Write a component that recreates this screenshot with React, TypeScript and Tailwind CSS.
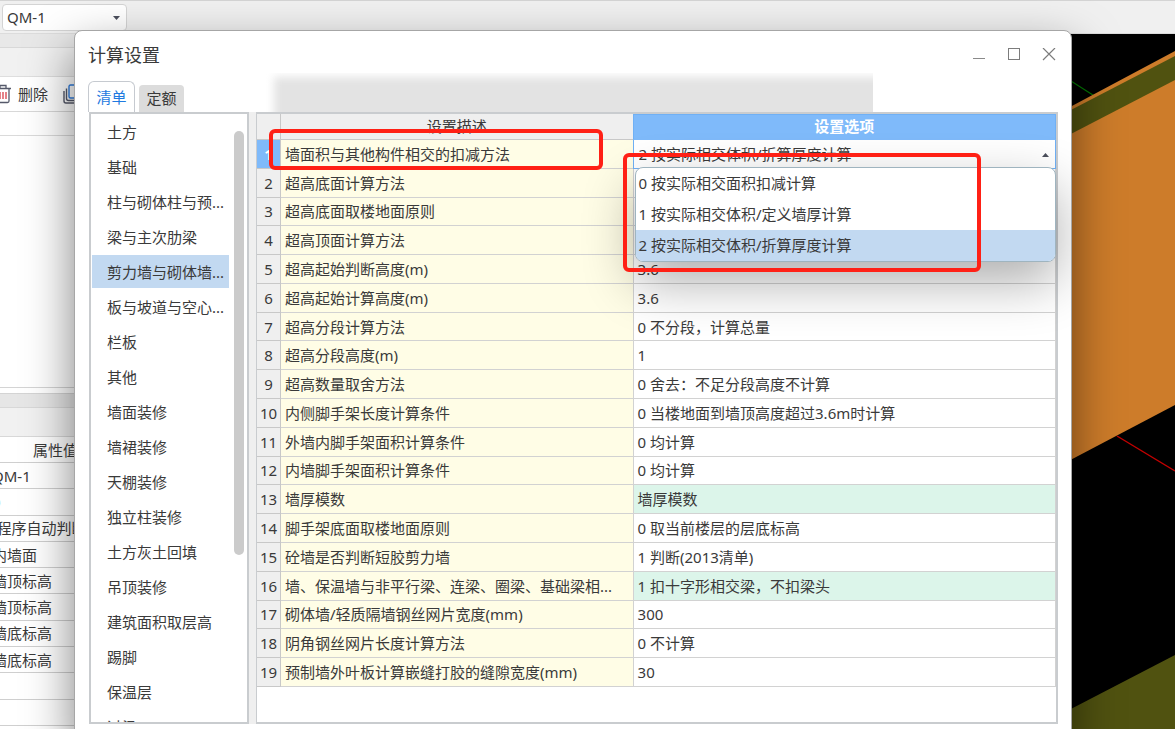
import clsx from 'clsx';

const CATEGORIES = [
  '土方',
  '基础',
  '柱与砌体柱与预...',
  '梁与主次肋梁',
  '剪力墙与砌体墙...',
  '板与坡道与空心...',
  '栏板',
  '其他',
  '墙面装修',
  '墙裙装修',
  '天棚装修',
  '独立柱装修',
  '土方灰土回填',
  '吊顶装修',
  '建筑面积取层高',
  '踢脚',
  '保温层',
  '过梁',
];

const SETTINGS = [
  { name: '墙面积与其他构件相交的扣减方法', value: '2 按实际相交体积/折算厚度计算' },
  { name: '超高底面计算方法', value: '' },
  { name: '超高底面取楼地面原则', value: '' },
  { name: '超高顶面计算方法', value: '' },
  { name: '超高起始判断高度(m)', value: '3.6' },
  { name: '超高起始计算高度(m)', value: '3.6' },
  { name: '超高分段计算方法', value: '0 不分段，计算总量' },
  { name: '超高分段高度(m)', value: '1' },
  { name: '超高数量取舍方法', value: '0 舍去：不足分段高度不计算' },
  { name: '内侧脚手架长度计算条件', value: '0 当楼地面到墙顶高度超过3.6m时计算' },
  { name: '外墙内脚手架面积计算条件', value: '0 均计算' },
  { name: '内墙脚手架面积计算条件', value: '0 均计算' },
  { name: '墙厚模数', value: '墙厚模数', changed: true },
  { name: '脚手架底面取楼地面原则', value: '0 取当前楼层的层底标高' },
  { name: '砼墙是否判断短胶剪力墙', value: '1 判断(2013清单)' },
  { name: '墙、保温墙与非平行梁、连梁、圈梁、基础梁相...', value: '1 扣十字形相交梁，不扣梁头', changed: true },
  { name: '砌体墙/轻质隔墙钢丝网片宽度(mm)', value: '300' },
  { name: '阴角钢丝网片长度计算方法', value: '0 不计算' },
  { name: '预制墙外叶板计算嵌缝打胶的缝隙宽度(mm)', value: '30' },
];

const OPTIONS = ['0 按实际相交面积扣减计算', '1 按实际相交体积/定义墙厚计算', '2 按实际相交体积/折算厚度计算'];

const PROPERTIES = ['QM-1', '0', '(程序自动判断)', '内墙面', '墙顶标高', '墙顶标高', '墙底标高', '墙底标高', '', ''];

const TrashIcon = () => (
  <svg width="18" height="20" viewBox="0 0 18 20" fill="none" strokeWidth="1.3" className="-ml-[6px] shrink-0">
    <path d="M1 4.5h16M6 4V1.5h6V4M3 5v12q0 1.5 1.5 1.5h9q1.5 0 1.5-1.5V5" stroke="#55596a" />
    <path d="M6 8v7M9 8v7M12 8v7" stroke="#d8404a" />
  </svg>
);

const CopyIcon = () => (
  <svg width="20" height="20" viewBox="0 0 20 20" fill="none" strokeWidth="1.4">
    <path d="M1 7v10q0 2 2 2h10M3.5 4.5v10q0 2 2 2h9" stroke="#55596a" />
    <rect x="6" y="1" width="13" height="13" rx="1.5" stroke="#2f7de0" />
  </svg>
);

const TopBar = () => (
  <header className="flex h-[34px] shrink-0 items-center border-t border-b border-t-[#d4d4d4] border-b-[#dcdcdc] bg-[#f0f0f0] pl-[2px]">
    <div className="relative">
      <select
        aria-label="构件"
        className="block h-[27px] w-[125px] appearance-none rounded-sm border border-[#d4d4d4] bg-white pl-[4px] leading-5"
      >
        <option>QM-1</option>
      </select>
      <svg width="7" height="4" viewBox="0 0 7 4" className="pointer-events-none absolute top-[12px] right-[7px]">
        <path d="M0 0h7L3.5 4z" fill="#4b4f5c" />
      </svg>
    </div>
  </header>
);

const LeftPanel = () => (
  <aside className="flex w-[120px] shrink-0 flex-col overflow-hidden bg-white">
    <div className="h-[14px] shrink-0 border-b border-[#d8d8d8] bg-[#e8e8e8]" />
    <div className="h-[29px] shrink-0 border-b border-[#dedede] bg-[#f1f1f1]" />
    <div className="flex h-[35px] shrink-0 items-center border-b border-[#d8d8d8]">
      <button className="flex items-center gap-[6px]">
        <TrashIcon />
        删除
      </button>
      <button aria-label="复制" className="ml-[15px]">
        <CopyIcon />
      </button>
    </div>
    <div className="h-[24px] shrink-0 border-b border-[#dadada]" />
    <div className="h-[252px] shrink-0 border-b border-[#d4d4d4]" />
    <div className="h-[6px] shrink-0 border-b border-[#d4d4d4]" />
    <div className="h-[14px] shrink-0 border-b border-[#d8d8d8] bg-[#e6e6e6]" />
    <div className="h-[29px] shrink-0 border-b border-[#d8d8d8] bg-[#f1f1f1]" />
    <table className="h-[289px] w-full shrink-0 table-fixed border-separate border-spacing-0 whitespace-nowrap">
      <thead>
        <tr className="h-[26px]">
          <th className="border-b border-[#cfcfcf] p-0 pl-[33px] text-left leading-5 font-normal">属性值</th>
        </tr>
      </thead>
      <tbody>
        {PROPERTIES.map((text, i) => (
          <tr key={i}>
            <td className="border-b border-[#cfcfcf] p-0">
              <p className={clsx('-ml-2 h-5 leading-5', i === 1 && 'text-[#2f8be6]')}>{text}</p>
            </td>
          </tr>
        ))}
      </tbody>
    </table>
  </aside>
);

const ModelView = () => (
  <main className="flex flex-1 justify-end overflow-hidden bg-black">
    <svg width="135" height="695" viewBox="1040 34 135 695" className="shrink-0">
      <path d="M1060 74L1096 97" stroke="#007a00" strokeWidth="1.2" />
      <path d="M1040 123L1175 51V405L1040 476z" fill="#cd7c2a" />
      <path d="M1040 126L1175 56V80L1040 150z" fill="#505210" />
      <path d="M1117 436L1175 471" stroke="#c40000" strokeWidth="1.4" />
      <path d="M1040 725L1175 655V729H1040z" fill="#505210" />
    </svg>
  </main>
);

const CategoryList = () => (
  <nav className="flex w-[160px] shrink-0 overflow-hidden border-2 border-[#c9cccf] bg-white">
    <ul className="ml-px flex-1">
      {CATEGORIES.map((name) => (
        <li key={name} className="h-[35px] py-px">
          <button
            className={clsx(
              'block h-[33px] w-full truncate pl-[15px] text-left leading-5',
              name.startsWith('剪力墙') && 'bg-[#c2d9f1]',
            )}
          >
            {name}
          </button>
        </li>
      ))}
    </ul>
    <div className="mt-[17px] mr-[3px] ml-[5px] h-[424px] w-[10px] rounded-full bg-[#cbcbcb]" />
  </nav>
);

const OptionSelect = () => (
  <>
    <select
      aria-label={SETTINGS[0].name}
      defaultValue={OPTIONS[2]}
      className="block h-5 w-full appearance-none bg-transparent pl-[5px] leading-5"
    >
      {OPTIONS.map((option) => (
        <option key={option}>{option}</option>
      ))}
    </select>
    <svg width="7" height="4" viewBox="0 0 7 4" className="pointer-events-none absolute top-[13px] right-[6px]">
      <path d="M0 4h7L3.5 0z" fill="#4b4f5c" />
    </svg>
    <ul
      role="listbox"
      className="absolute top-[27px] -right-px left-px z-10 overflow-hidden rounded-lg border border-[#9fb4bf] bg-white shadow-[0_20px_52px_rgba(0,0,0,0.32)]"
    >
      {OPTIONS.map((option, i) => (
        <li
          key={option}
          role="option"
          aria-selected={i === 2}
          className={clsx('h-[31px] pl-[3px] leading-[31px]', i === 2 && 'bg-[#c2d9f1]')}
        >
          {option}
        </li>
      ))}
    </ul>
    <div className="pointer-events-none absolute top-[13px] -left-[11px] z-20 h-[119px] w-[358px] rounded-md border-4 border-[#ff2015]" />
  </>
);

const SettingsTable = () => (
  <div className="flex-1 border-2 border-l border-[#c9cccf] bg-white">
    <table className="h-[573px] w-full table-fixed border-separate border-spacing-0 whitespace-nowrap">
      <thead>
        <tr className="h-[26px]">
          <th className="w-[24px] border-r border-b border-[#c8c8c8] bg-[#efefef] p-0" />
          <th className="w-[44%] border-b border-[#c8c8c8] bg-[#efefef] p-0 pb-[2px] leading-5 font-normal">
            设置描述
          </th>
          <th className="border border-[#6fb0f5] border-b-[#7fbafa] bg-[#7fbafa] p-0 pb-[2px] leading-5 font-bold text-white">
            设置选项
          </th>
        </tr>
      </thead>
      <tbody>
        {SETTINGS.map(({ name, value, changed }, i) => (
          <tr key={name}>
            <td
              className={clsx(
                'border-r border-b border-[#c8c8c8] p-0 text-center leading-5',
                i === 0 ? 'bg-[#7fbafa] font-bold text-white' : 'bg-[#efefef]',
              )}
            >
              {i + 1}
            </td>
            <td className="relative border-b border-[#d2d2d2] bg-[#fffde6] p-0 pl-[4px] leading-5">
              {name}
              {i === 0 && (
                <div className="pointer-events-none absolute -top-[11px] -left-[12px] z-20 h-[41px] w-[334px] rounded-md border-4 border-[#ff2015]" />
              )}
            </td>
            {i === 0 ? (
              <td className="relative border border-t-0 border-[#6fb0f5] p-0">
                <OptionSelect />
              </td>
            ) : (
              <td
                className={clsx(
                  'border-x border-b border-[#d2d2d2] p-0 pl-[4px] leading-5',
                  changed && 'bg-[#dcf5ea]',
                )}
              >
                {value}
              </td>
            )}
          </tr>
        ))}
      </tbody>
    </table>
  </div>
);

const WindowButtons = () => (
  <div className="flex items-center gap-[21px]">
    <button aria-label="最小化">
      <svg width="14" height="14" viewBox="0 0 14 14" stroke="#8a8a8a">
        <path d="M1 10.500h12" />
      </svg>
    </button>
    <button aria-label="最大化">
      <svg width="14" height="14" viewBox="0 0 14 14" fill="none" stroke="#7c7c7c">
        <rect x="1.5" y=".5" width="11" height="11" />
      </svg>
    </button>
    <button aria-label="关闭">
      <svg width="14" height="14" viewBox="0 0 14 14" stroke="#7c7c7c" strokeWidth="1.2">
        <path d="M1 0l12 12M13 0L1 12" />
      </svg>
    </button>
  </div>
);

const SettingsDialog = () => (
  <section
    role="dialog"
    aria-label="计算设置"
    className="absolute top-[30px] right-[103px] -bottom-[14px] left-[74px] flex flex-col overflow-hidden rounded-lg border border-[#a6a6a6] bg-white shadow-[0_20px_48px_rgba(0,0,0,0.5)]"
  >
    <div className="flex h-[42px] shrink-0 items-center pt-[6px] pr-[15px] pl-[13px]">
      <h1 className="flex-1 text-[18px] leading-6">计算设置</h1>
      <WindowButtons />
    </div>
    <div className="flex h-[39px] shrink-0 items-end pr-[198px] pl-[13px]">
      <button className="h-[31px] w-[47px] rounded-t-md border border-b-0 border-[#c6cad0] bg-white text-[#1f7ae0]">
        清单
      </button>
      <button className="ml-[4px] h-[27px] w-[45px] rounded-t-sm bg-[#dcdcdc]">定额</button>
      <div className="h-[39px] flex-1 overflow-hidden pt-[4px] pl-[90px]">
        <div className="-mr-4 h-14 bg-[#e3e3e3] blur-[4px]" />
      </div>
    </div>
    <div className="mr-[13px] mb-[18px] ml-[14px] flex min-h-0 flex-1 gap-[7px] bg-[#efefef]">
      <CategoryList />
      <SettingsTable />
    </div>
  </section>
);

const App = () => {
  return (
    <div className="relative flex h-screen flex-col overflow-hidden bg-[#f0f0f0] font-['Noto_Sans','Noto_Sans_CJK_SC',sans-serif] text-[15px] text-[#3a3a3a]">
      <TopBar />
      <div className="flex min-h-0 flex-1">
        <LeftPanel />
        <ModelView />
      </div>
      <SettingsDialog />
    </div>
  );
};

export default App;
